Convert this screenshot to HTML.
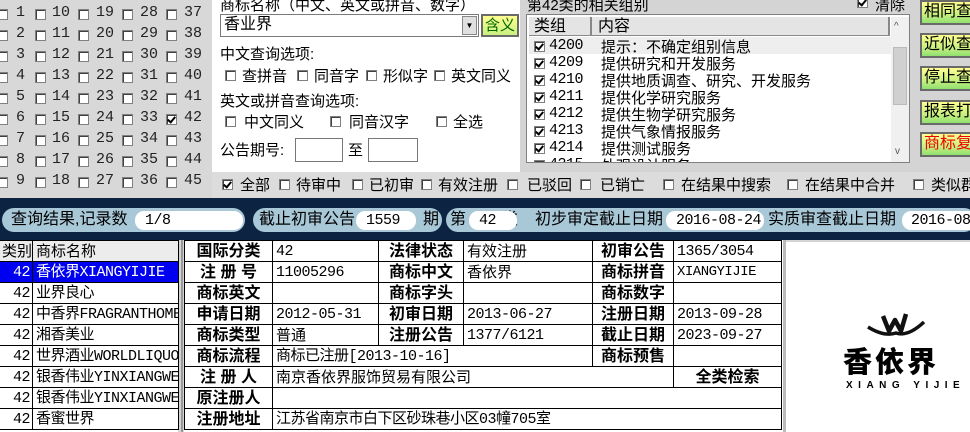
<!DOCTYPE html>
<html><head><meta charset="utf-8"><style>
*{margin:0;padding:0;box-sizing:border-box}
body{width:970px;height:432px;overflow:hidden;background:#d4d4d4;position:relative;font-family:"Liberation Sans","Noto Sans CJK SC",sans-serif;font-size:15px;color:#000}
.a{position:absolute;white-space:nowrap}
.cb{position:absolute;width:11px;height:11px;border:1px solid #808080;background:#fff;box-shadow:inset 1px 1px 0 #404040}
.ck::after{content:"";position:absolute;left:2px;top:0px;width:3px;height:6px;border:solid #000;border-width:0 2px 2px 0;transform:rotate(40deg)}
.n{position:absolute;font-family:"Liberation Mono",monospace;font-size:15px;color:#222}
.btn{position:absolute;left:920px;width:52px;height:25px;border:2px solid #6a6a6a;border-right:none;background:linear-gradient(#ffff90,#c8f080 60%,#90e070);font-size:16px;padding-left:2px;line-height:20px;overflow:hidden}
.pill{position:absolute;top:208px;height:24px;background:#a8c8d8;border-radius:12px;font-size:16px;line-height:24px;white-space:nowrap}
.wp{position:absolute;top:211px;height:19px;background:#fff;border-radius:9px;font-family:"Liberation Mono",monospace;font-size:15px;line-height:19px;padding-left:10px;white-space:nowrap;overflow:hidden;letter-spacing:-0.5px}
table{border-collapse:collapse;position:absolute}
td{border:1px solid #000;height:21px;padding:0 3px;font-size:15px;line-height:19px;white-space:nowrap;overflow:hidden}
td.l{font-weight:bold;text-align:center;font-size:16px}
.m{font-family:"Liberation Mono","Noto Sans CJK SC",monospace;letter-spacing:-0.5px}
</style></head><body>
<div class="a" style="left:0;top:0;width:212px;height:198px;background:#d8d8d8"></div>
<div class="a" style="left:212px;top:0;width:308px;height:172px;background:#fff"></div>
<div class="a" style="left:220px;top:-6px;font-size:15px">商标名称（中文、英文或拼音、数字）</div>
<div class="a" style="left:220px;top:14px;width:259px;height:23px;border:1px solid #7a7a7a;background:#fff;font-size:16px;line-height:20px;padding-left:3px">香业界</div>
<div class="a" style="left:462px;top:16px;width:15px;height:19px;background:#e0e0e0;border:1px solid #888;font-size:8px;text-align:center;line-height:18px">▼</div>
<div class="a" style="left:481px;top:14px;width:38px;height:23px;background:linear-gradient(#ffff90,#c8f080);border:2px solid #6a6a6a;font-size:15px;text-align:center;line-height:19px;color:#060">含义</div>
<div class="a" style="left:220px;top:43px">中文查询选项:</div>
<div class="cb" style="left:225px;top:70px"></div><div class="a" style="left:242px;top:65px">查拼音</div>
<div class="cb" style="left:297px;top:70px"></div><div class="a" style="left:314px;top:65px">同音字</div>
<div class="cb" style="left:366px;top:70px"></div><div class="a" style="left:383px;top:65px">形似字</div>
<div class="cb" style="left:434px;top:70px"></div><div class="a" style="left:451px;top:65px">英文同义</div>
<div class="a" style="left:220px;top:90px">英文或拼音查询选项:</div>
<div class="cb" style="left:225px;top:116px"></div><div class="a" style="left:244px;top:111px">中文同义</div>
<div class="cb" style="left:330px;top:116px"></div><div class="a" style="left:349px;top:111px">同音汉字</div>
<div class="cb" style="left:436px;top:116px"></div><div class="a" style="left:453px;top:111px">全选</div>
<div class="a" style="left:220px;top:139px">公告期号:</div>
<div class="a" style="left:295px;top:138px;width:48px;height:24px;border:1px solid #777;background:#fff"></div>
<div class="a" style="left:348px;top:139px">至</div>
<div class="a" style="left:368px;top:138px;width:50px;height:24px;border:1px solid #777;background:#fff"></div>
<div class="a" style="left:212px;top:172px;width:758px;height:26px;background:#dcdcdc"></div>
<div id="grid"></div>
<div class="cb ck" style="left:222px;top:179px"></div><div class="a" style="left:240px;top:174px">全部</div>
<div class="cb" style="left:279px;top:179px"></div><div class="a" style="left:296px;top:174px">待审中</div>
<div class="cb" style="left:352px;top:179px"></div><div class="a" style="left:369px;top:174px">已初审</div>
<div class="cb" style="left:421px;top:179px"></div><div class="a" style="left:438px;top:174px">有效注册</div>
<div class="cb" style="left:507px;top:179px"></div><div class="a" style="left:527px;top:174px">已驳回</div>
<div class="cb" style="left:580px;top:179px"></div><div class="a" style="left:600px;top:174px">已销亡</div>
<div class="cb" style="left:663px;top:179px"></div><div class="a" style="left:681px;top:174px">在结果中搜索</div>
<div class="cb" style="left:787px;top:179px"></div><div class="a" style="left:805px;top:174px">在结果中合并</div>
<div class="cb" style="left:913px;top:179px"></div><div class="a" style="left:931px;top:174px">类似群</div>
<div class="a" style="left:527px;top:-6px">第42类的相关组别</div>
<div class="cb ck" style="left:857px;top:-3px"></div><div class="a" style="left:875px;top:-6px">清除</div>
<div class="a" style="left:526px;top:14px;width:384px;height:149px;border:1px solid #808080;background:#fff;overflow:hidden">
 <div class="a" style="left:2px;top:2px;width:63px;height:19px;background:#e4e4e4;border-right:2px solid #888;border-bottom:1px solid #888;padding-left:5px;line-height:19px;font-size:16px">类组</div>
 <div class="a" style="left:65px;top:2px;width:298px;height:19px;background:#e4e4e4;border-right:2px solid #888;border-bottom:1px solid #888;padding-left:6px;line-height:19px;font-size:16px">内容</div>
 <div class="a" style="left:2px;top:22px;width:362px;height:17px;background:#eee"></div>
 <div id="lst"></div>
 <div class="a" style="left:364px;top:2px;width:18px;height:145px;background:#f0f0f0"></div>
 <div class="a" style="left:367px;top:6px;font-size:10px;color:#555">^</div>
 <div class="a" style="left:366px;top:32px;width:14px;height:58px;background:#d0d0d0;border:1px solid #bbb"></div>
 <div class="a" style="left:368px;top:131px;font-size:10px;color:#555">v</div>
</div>
<div class="btn" style="top:0">相同查</div>
<div class="btn" style="top:33px">近似查</div>
<div class="btn" style="top:66px">停止查</div>
<div class="btn" style="top:100px">报表打</div>
<div class="btn" style="top:132px;color:#e00">商标复</div>
<div class="a" style="left:0;top:198px;width:970px;height:42px;background:#0c2442"></div>
<div class="pill" style="left:2px;width:243px;padding-left:9px">查询结果,记录数</div>
<div class="wp" style="left:135px;width:108px">1/8</div>
<div class="pill" style="left:253px;width:189px;padding-left:6px">截止初审公告<span style="position:absolute;left:170px">期</span></div>
<div class="wp" style="left:356px;width:60px">1559</div>
<div class="pill" style="left:446px;width:530px;padding-left:4px">第<span style="position:absolute;left:56px">类</span><span style="position:absolute;left:89px">初步审定截止日期</span><span style="position:absolute;left:322px">实质审查截止日期</span></div>
<div class="wp" style="left:469px;width:48px">42</div>
<div class="wp" style="left:666px;width:98px;padding-left:10px">2016-08-24</div>
<div class="wp" style="left:902px;width:80px;padding-left:9px">2016-08-</div>
<div class="a" style="left:0;top:240px;width:178px;height:192px;background:#fff"></div>
<table style="left:-1px;top:240px;width:179px;table-layout:fixed">
<col style="width:33px"><col style="width:146px">
<tr style="background:#ececec"><td style="padding:0;text-align:right">类别</td><td>商标名称</td></tr>
<tr style="background:#0000f0;color:#fff"><td style="text-align:right;padding:0 2px 0 0" class="m">42</td><td class="m">香依界XIANGYIJIE</td></tr>
<tr><td style="text-align:right;padding:0 2px 0 0" class="m">42</td><td class="m">业界良心</td></tr>
<tr><td style="text-align:right;padding:0 2px 0 0" class="m">42</td><td class="m">中香界FRAGRANTHOME</td></tr>
<tr><td style="text-align:right;padding:0 2px 0 0" class="m">42</td><td class="m">湘香美业</td></tr>
<tr><td style="text-align:right;padding:0 2px 0 0" class="m">42</td><td class="m">世界酒业WORLDLIQUOR</td></tr>
<tr><td style="text-align:right;padding:0 2px 0 0" class="m">42</td><td class="m">银香伟业YINXIANGWEI</td></tr>
<tr><td style="text-align:right;padding:0 2px 0 0" class="m">42</td><td class="m">银香伟业YINXIANGWEI</td></tr>
<tr><td style="text-align:right;padding:0 2px 0 0" class="m">42</td><td class="m">香蜜世界</td></tr>
</table>
<div class="a" style="left:181px;top:240px;width:2px;height:192px;background:#999"></div>
<div class="a" style="left:184px;top:240px;width:600px;height:192px;background:#fff"></div>
<table style="left:184px;top:240px;width:597px;table-layout:fixed">
<col style="width:88px"><col style="width:106px"><col style="width:85px"><col style="width:129px"><col style="width:81px"><col style="width:108px">
<tr><td class="l">国际分类</td><td class="m">42</td><td class="l">法律状态</td><td>有效注册</td><td class="l">初审公告</td><td class="m">1365/3054</td></tr>
<tr><td class="l">注 册 号</td><td class="m">11005296</td><td class="l">商标中文</td><td>香依界</td><td class="l">商标拼音</td><td class="m" style="font-size:14px">XIANGYIJIE</td></tr>
<tr><td class="l">商标英文</td><td></td><td class="l">商标字头</td><td></td><td class="l">商标数字</td><td></td></tr>
<tr><td class="l">申请日期</td><td class="m">2012-05-31</td><td class="l">初审日期</td><td class="m">2013-06-27</td><td class="l">注册日期</td><td class="m">2013-09-28</td></tr>
<tr><td class="l">商标类型</td><td>普通</td><td class="l">注册公告</td><td class="m">1377/6121</td><td class="l">截止日期</td><td class="m">2023-09-27</td></tr>
<tr><td class="l">商标流程</td><td colspan="3" class="m">商标已注册[2013-10-16]</td><td class="l">商标预售</td><td></td></tr>
<tr><td class="l">注 册 人</td><td colspan="4">南京香依界服饰贸易有限公司</td><td class="l">全类检索</td></tr>
<tr><td class="l">原注册人</td><td colspan="5"></td></tr>
<tr><td class="l">注册地址</td><td colspan="5" class="m">江苏省南京市白下区砂珠巷小区03幢705室</td></tr>
</table>
<div class="a" style="left:783px;top:240px;width:3px;height:192px;background:#bbb"></div>
<div class="a" style="left:786px;top:242px;width:184px;height:190px;background:#fff"></div>
<svg class="a" style="left:866px;top:312px" width="60" height="28" viewBox="0 0 60 28">
<path d="M2 15 Q18 25 30 21 Q42 25 58 10" fill="none" stroke="#111" stroke-width="3.5"/>
<path d="M17 4 L23 19 L29 8 L35 19 L40 2" fill="none" stroke="#111" stroke-width="4.5" stroke-linejoin="round"/>
</svg>
<div class="a" style="left:843px;top:343px;font-size:29px;font-weight:900;letter-spacing:3px;font-family:'Noto Sans CJK SC',sans-serif;line-height:34px">香依界</div>
<div class="a" style="left:846px;top:380px;font-size:10px;font-weight:bold;letter-spacing:5.5px">XIANG YIJIE</div>
<script>
var g=document.getElementById('grid'),h='';
var xs=[-3,35,78,122,166],nx=[16,52,96,140,184];
for(var c=0;c<5;c++)for(var r=0;r<9;r++){var n=c*9+r+1,y=9+r*21;
h+='<div class="cb'+(n==42?' ck':'')+'" style="left:'+xs[c]+'px;top:'+y+'px"></div><div class="n" style="left:'+nx[c]+'px;top:'+(y-5)+'px">'+n+'</div>';}
g.innerHTML=h;
var L=[['4200','提示：不确定组别信息'],['4209','提供研究和开发服务'],['4210','提供地质调查、研究、开发服务'],['4211','提供化学研究服务'],['4212','提供生物学研究服务'],['4213','提供气象情报服务'],['4214','提供测试服务'],['4215','外观设计服务']];
h='';for(var i=0;i<L.length;i++){var y=24+i*17;
h+='<div class="cb ck" style="left:7px;top:'+(y+2)+'px"></div><div class="a m" style="left:22px;top:'+(y-2)+'px">'+L[i][0]+'</div><div class="a" style="left:74px;top:'+(y-3)+'px">'+L[i][1]+'</div>';}
document.getElementById('lst').innerHTML=h;
</script>
</body></html>
